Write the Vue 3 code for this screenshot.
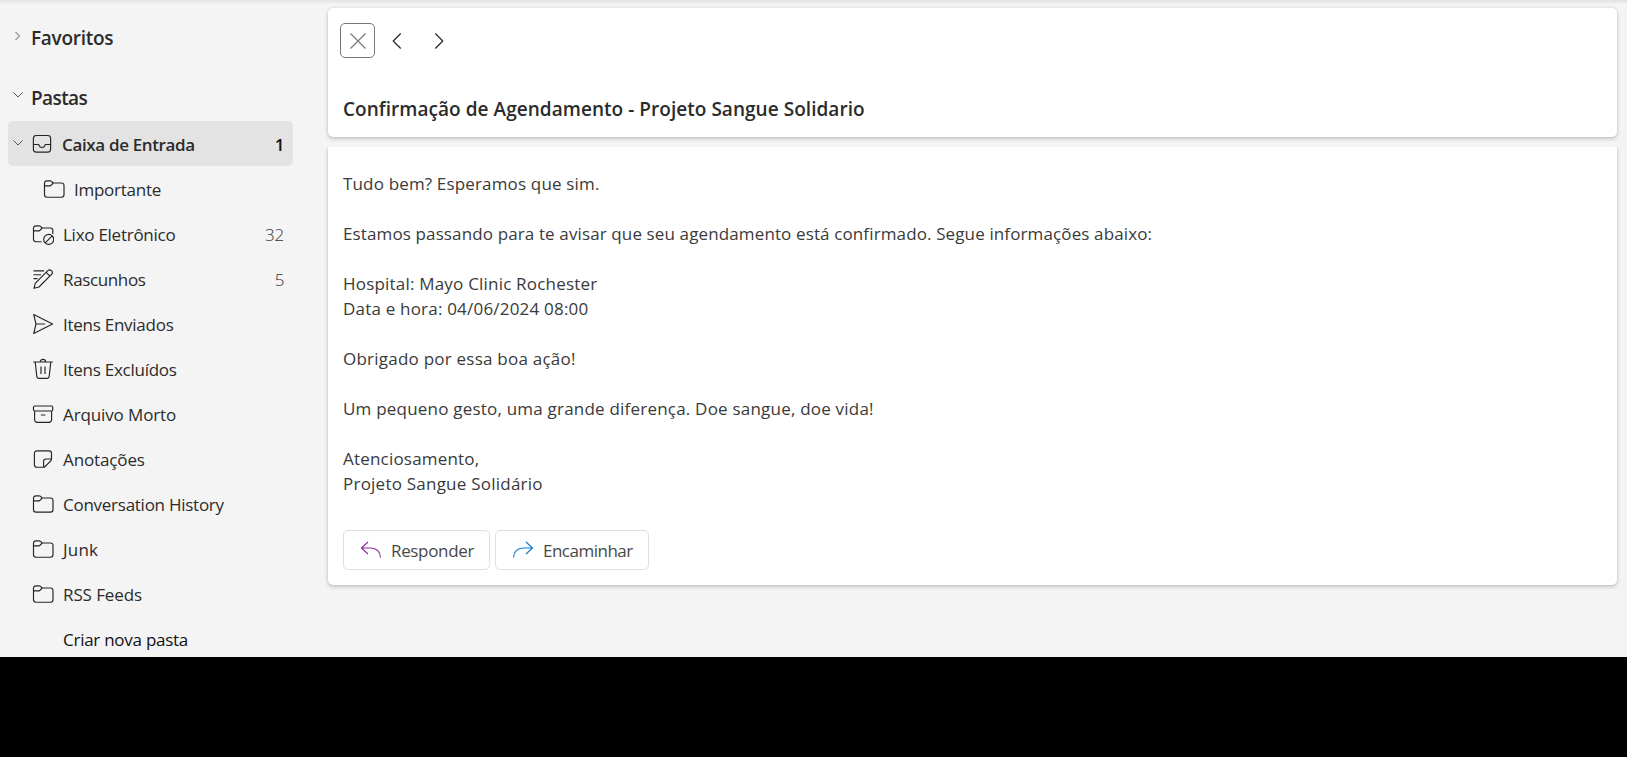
<script setup>
const FOLDER = 'M1.5 8.3V5.2a2.4 2.4 0 0 1 2.4-2.4h3.2c.6 0 1 .2 1.4.6l1.7 1.6-2 2.2c-.4.5-.9.7-1.5.7H1.5v8.9a2.4 2.4 0 0 0 2.4 2.4h14.7a2.4 2.4 0 0 0 2.4-2.4V7.3a2.3 2.3 0 0 0-2.4-2.3h-8.4'

const folders = [
  { id: 'important', label: 'Importante', child: true, icon: [FOLDER] },
  {
    id: 'junkmail', label: 'Lixo Eletrônico', count: 32,
    icon: [
      'M9.6 18.7H3.9A2.4 2.4 0 0 1 1.5 16.3V5.2a2.4 2.4 0 0 1 2.4-2.400h3.200c.6 0 1 .2 1.400.6l1.700 1.600-2 2.200c-.4.5-.9.7-1.500.7H1.500M10.200 5h8.200a2.400 2.400 0 0 1 2.400 2.400V11',
      'M11.700 16.400a5 5 0 1 0 10 0a5 5 0 1 0-10 0M13.200 19.900l7-7'
    ]
  },
  {
    id: 'drafts', label: 'Rascunhos', count: 5,
    icon: [
      'M2 20.300l1.200-5L15.800 2.700a2.600 2.600 0 0 1 3.700 3.700L7 19zM14.200 4.400l3.700 3.700',
      'M1.500 2.800h10.700M1.500 6.700h7.500M1.500 10.600h4'
    ]
  },
  { id: 'sent', label: 'Itens Enviados', icon: ['M1.700 1.600L20.600 11L1.700 20.500L4 11zM4 11h9'] },
  {
    id: 'deleted', label: 'Itens Excluídos',
    icon: ['M1.200 4h19.600M8.200 4a2.700 2.700 0 0 1 5.400 0M3.200 4l1.600 14.200a2.400 2.400 0 0 0 2.400 2.200h7.600a2.400 2.400 0 0 0 2.400-2.200L18.800 4M9 8.400v7.700M13 8.400v7.700']
  },
  {
    id: 'archive', label: 'Arquivo Morto',
    icon: ['M2.700 3h16.800a1.200 1.200 0 0 1 1.200 1.200v2.600a1.200 1.200 0 0 1-1.200 1.200H2.700a1.200 1.200 0 0 1-1.200-1.200V4.200A1.200 1.200 0 0 1 2.700 3zM2.600 8v8.600a2.700 2.700 0 0 0 2.700 2.700h11.600a2.700 2.700 0 0 0 2.700-2.700V8M8.900 12h4.400']
  },
  {
    id: 'notes', label: 'Anotações',
    icon: ['M19.500 11V5.300a2.500 2.500 0 0 0-2.500-2.500H4.900a2.500 2.500 0 0 0-2.500 2.500v11.400a2.500 2.500 0 0 0 2.500 2.500h6.500c.7 0 1.200-.2 1.700-.7l5.700-5.700c.5-.5.7-1 .7-1.800h-5.400a2.500 2.500 0 0 0-2.500 2.500v5.700']
  },
  { id: 'history', label: 'Conversation History', icon: [FOLDER] },
  { id: 'junk', label: 'Junk', icon: [FOLDER] },
  { id: 'rss', label: 'RSS Feeds', icon: [FOLDER] }
]

const message = [
  { id: 'm1', text: 'Tudo bem? Esperamos que sim.' },
  { id: 'm2', text: 'Estamos passando para te avisar que seu agendamento está confirmado. Segue informações abaixo:', gap: true },
  { id: 'm3', text: 'Hospital: Mayo Clinic Rochester', gap: true },
  { id: 'm4', text: 'Data e hora: 04/06/2024 08:00' },
  { id: 'm5', text: 'Obrigado por essa boa ação!', gap: true },
  { id: 'm6', text: 'Um pequeno gesto, uma grande diferença. Doe sangue, doe vida!', gap: true },
  { id: 'm7', text: 'Atenciosamento,', gap: true },
  { id: 'm8', text: 'Projeto Sangue Solidário' }
]
</script>

<template>
  <div class="screen">
    <div class="app">
      <nav class="sidebar">
        <div class="group favorites">
          <svg class="chevron" viewBox="0 0 12 12"><path d="M3.500 2l4 4-4 4" /></svg>
          <span>Favoritos</span>
        </div>
        <div class="group folders">
          <svg class="chevron" viewBox="0 0 12 12"><path d="M1.500 3.500l4.500 4.500 4.500-4.500" /></svg>
          <span>Pastas</span>
        </div>
        <div class="row inbox">
          <svg class="chevron" viewBox="0 0 12 12"><path d="M1.500 3.500l4.500 4.500 4.500-4.500" /></svg>
          <svg class="icon" viewBox="0 0 22 22">
            <path d="M4.200 2.500h11.600a2.800 2.800 0 0 1 2.800 2.800v11a2.800 2.800 0 0 1-2.800 2.800H4.200a2.800 2.800 0 0 1-2.800-2.800v-11a2.800 2.800 0 0 1 2.800-2.800zM1.400 11.500h4.800c.5 0 .8.3.9.800a3 3 0 0 0 5.800 0c.1-.5.4-.8.9-.8h4.800" />
          </svg>
          <span class="name">Caixa de Entrada</span>
          <span class="count">1</span>
        </div>
        <div v-for="f in folders" :key="f.id" class="row" :class="[f.id, { child: f.child }]">
          <svg class="icon" viewBox="0 0 22 22"><path v-for="(d, i) in f.icon" :key="i" :d="d" /></svg>
          <span class="name">{{ f.label }}</span>
          <span v-if="f.count" class="count">{{ f.count }}</span>
        </div>
        <div class="row create"><span class="name">Criar nova pasta</span></div>
      </nav>

      <main class="reader">
        <header class="card head">
          <div class="tools">
            <button class="tool close"><svg viewBox="0 0 18 18"><path d="M1.500 1.500l15 15M16.500 1.500l-15 15" /></svg></button>
            <button class="tool prev"><svg viewBox="0 0 18 18"><path d="M12.700 1.500L5.200 9l7.500 7.500" /></svg></button>
            <button class="tool next"><svg viewBox="0 0 18 18"><path d="M5.300 1.500L12.800 9l-7.500 7.500" /></svg></button>
          </div>
          <h1>Confirmação de Agendamento - Projeto Sangue Solidario</h1>
        </header>
        <article class="card body">
          <p v-for="m in message" :key="m.id" :class="[m.id, { gap: m.gap }]">{{ m.text }}</p>
          <div class="actions">
            <button class="action reply">
              <svg viewBox="0 0 22 18"><path d="M8 1L1.500 7 8 13M1.500 7h9.500c5.500 0 9.500 4 9.500 9.500" /></svg>
              <span>Responder</span>
            </button>
            <button class="action forward">
              <svg viewBox="0 0 22 18"><path d="M14 1l6.500 6L14 13M20.500 7H11C5.500 7 1.500 11 1.500 16.500" /></svg>
              <span>Encaminhar</span>
            </button>
          </div>
        </article>
      </main>
    </div>
  </div>
</template>

<style>
body { background: #000; }
</style>

<style scoped>
.screen {
  width: 100%;
  height: 757px;
  overflow: hidden;
  background: #000;
  font-family: "Open Sans", "Noto Sans", sans-serif;
  font-size: 17px;
  color: #2b2b2b;
}
.app {
  display: flex;
  height: 657px;
  overflow: hidden;
  background: linear-gradient(#e4e4e4 0, #e8e8e8 2px, #f4f4f4 4px);
}
svg { fill: none; stroke: currentColor; stroke-width: 1.15; stroke-linejoin: round; flex: none; display: block; }

.sidebar { width: 328px; flex: none; box-sizing: border-box; padding: 8px 35px 0 8px; }
.group {
  display: flex;
  align-items: center;
  box-sizing: border-box;
  height: 60px;
  padding-left: 4px;
  font-size: 19px;
  font-weight: 600;
  letter-spacing: -0.28px;
}
.group span { margin-left: 7px; }
.group .chevron { margin-bottom: 4px; }
.group.folders { height: 53px; padding-top: 6px; letter-spacing: -0.6px; }
.group.folders .chevron { margin: 0 0 5px; }
.chevron { width: 12px; height: 12px; stroke-width: 0.9; color: #444; }

.row {
  display: flex;
  align-items: center;
  box-sizing: border-box;
  height: 45px;
  padding: 0 9px 0 24px;
  white-space: nowrap;
  letter-spacing: -0.26px;
}
.row .icon { width: 22px; height: 22px; color: #242424; }
.row .name { margin-left: 9px; padding-top: 1px; }
.row .count { margin-left: auto; padding-top: 1px; font-weight: 300; color: #333; }
.row.inbox { padding-left: 4px; border-radius: 5px; background: #e3e3e3; font-weight: 600; letter-spacing: -0.35px; }
.row.inbox .chevron { margin-bottom: 2px; }
.row.inbox .icon { margin-left: 8px; }
.row.inbox .name { margin-left: 8px; }
.row.inbox .count { color: #111; font-weight: 600; }
.row.child { padding-left: 35px; }
.row.create { padding-left: 46px; color: #111; }
.row.drafts { letter-spacing: -0.36px; }
.row.archive, .row.notes { letter-spacing: -0.12px; }
.row.junk { letter-spacing: 0.2px; }
.row.rss { letter-spacing: -0.1px; }

.reader { flex: 1; min-width: 0; padding: 8px 10px 0 0; }
.card {
  box-sizing: border-box;
  background: #fff;
  box-shadow: 0 0 2px rgba(0, 0, 0, 0.16), 0 2px 4px rgba(0, 0, 0, 0.18);
}
.head { height: 129px; padding: 15px 12px 0; border-radius: 5px; }
.tools { display: flex; align-items: center; height: 35px; }
.tool {
  display: flex;
  align-items: center;
  justify-content: center;
  box-sizing: border-box;
  width: 35px;
  height: 35px;
  padding: 0;
  border: 0;
  background: none;
  color: #242424;
}
.tool svg { width: 18px; height: 18px; }
.tool.close { border: 1px solid #777; border-radius: 5px; color: #777; }
.tool.prev { margin-left: 4px; }
.tool.next { margin-left: 7px; }
h1 {
  margin: 36px 0 0 3px;
  font-size: 19px;
  line-height: 30px;
  font-weight: 600;
  letter-spacing: 0.04px;
}
.body { margin-top: 10px; height: 438px; padding: 24px 15px 0; border-radius: 0 0 5px 5px; clip-path: inset(0 -10px -10px -10px); }
p { margin: 0; line-height: 25px; color: #3a3a3a; letter-spacing: 0.2px; white-space: nowrap; }
p.gap { margin-top: 25px; }
.m1 { letter-spacing: 0.16px; }
.m2 { letter-spacing: 0.125px; }
.m5, .m8 { letter-spacing: 0.23px; }
.m6 { letter-spacing: 0.21px; }

.actions { display: flex; gap: 5px; margin-top: 34px; }
.action {
  display: flex;
  align-items: center;
  box-sizing: border-box;
  height: 40px;
  width: 147px;
  padding: 0 0 0 16px;
  border: 1px solid #e0e0e0;
  border-radius: 5px;
  background: #fff;
  font: inherit;
  color: #484848;
  letter-spacing: -0.34px;
}
.action svg { width: 22px; height: 18px; margin-bottom: 1px; }
.action span { margin-left: 9px; padding-top: 1px; }
.action.reply svg { color: #8e2da0; }
.action.forward { width: 154px; letter-spacing: -0.5px; }
.action.forward svg { color: #0f7fd4; }
</style>
